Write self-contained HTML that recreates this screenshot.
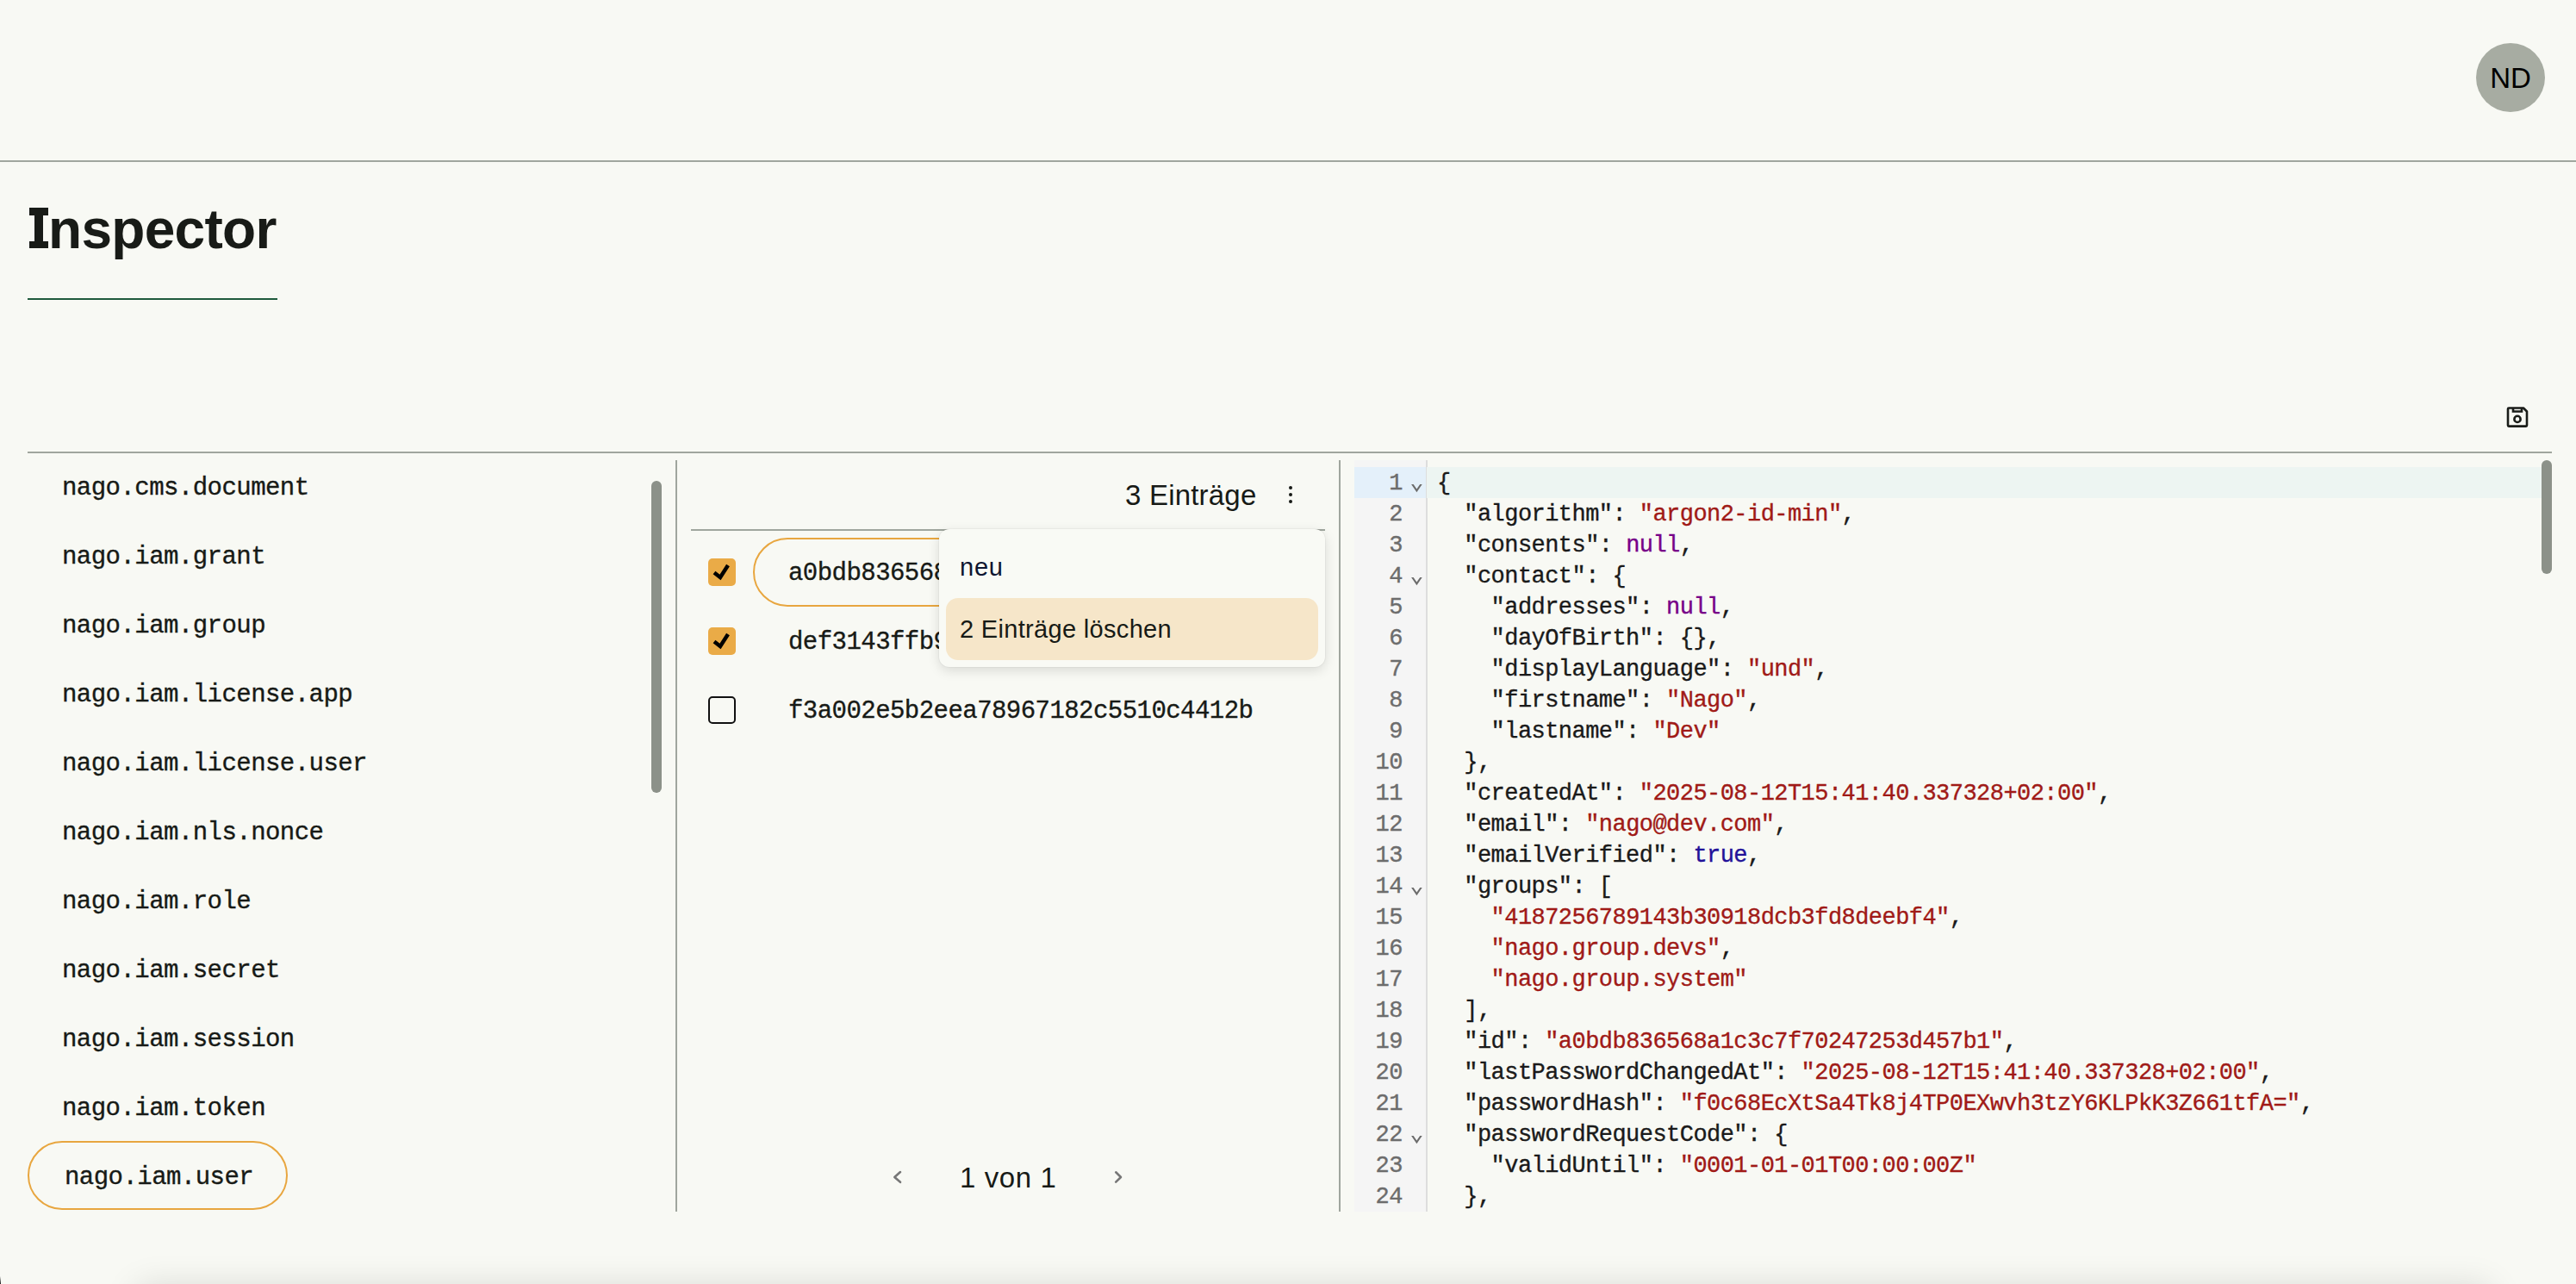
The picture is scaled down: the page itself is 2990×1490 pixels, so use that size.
<!DOCTYPE html>
<html><head><meta charset="utf-8">
<style>
html,body{margin:0;padding:0;}
body{width:2990px;height:1490px;overflow:hidden;background:#f8f9f4;position:relative;font-family:"Liberation Sans",sans-serif;color:#171a16;}
.a{position:absolute;}
.mono{font-family:"Liberation Mono",monospace;-webkit-text-stroke:0.35px currentColor;}
.hline{position:absolute;height:2px;background:#a0a69e;}
.vline{position:absolute;width:2px;background:#a0a69e;}
.li{position:absolute;left:72px;font-size:29px;line-height:40px;white-space:pre;letter-spacing:-0.547px;}
.thumb{position:absolute;width:12px;border-radius:6px;background:#8c9189;}
.cb{position:absolute;left:822px;width:32px;height:32px;border-radius:5px;box-sizing:border-box;}
.cb.on{background:#eaab47;}
.cb.off{border:2px solid #111;}
.row{position:absolute;left:915px;font-size:29px;line-height:40px;white-space:pre;letter-spacing:-0.547px;}
.code{position:absolute;left:1668px;top:543px;font-size:27px;line-height:36px;white-space:pre;color:#1a1a1a;letter-spacing:-0.551px;}
.gut{position:absolute;left:1572px;top:534px;width:83px;height:872px;background:#f5f5f5;border-right:2px solid #dddddd;}
.ln{position:absolute;left:1572px;top:543px;width:56px;text-align:right;font-size:27px;letter-spacing:-0.5px;line-height:36px;color:#6c6c6c;white-space:pre;}
.s{color:#a01a17;}
.n{color:#708;}
.b{color:#219;}
</style></head><body>

<!-- header -->
<div class="hline" style="left:0;top:186px;width:2990px;"></div>
<div class="a" style="left:2874px;top:50px;width:80px;height:80px;border-radius:50%;background:#a7aca2;"></div>
<div class="a" style="left:2874px;top:51px;width:80px;color:#000;font-size:33px;line-height:80px;text-align:center;">ND</div>

<!-- title -->
<div class="a" style="left:34px;top:241px;width:21.5px;height:8.5px;background:#181b17;"></div>
<div class="a" style="left:40px;top:241px;width:9.7px;height:46.7px;background:#181b17;"></div>
<div class="a" style="left:34px;top:279.5px;width:21.5px;height:8.2px;background:#181b17;"></div>
<div class="a" style="left:56px;top:225.5px;font-size:64px;line-height:80px;font-weight:bold;letter-spacing:-0.7px;color:#181b17;">nspector</div>
<div class="a" style="left:32px;top:346px;width:290px;height:2px;background:#1f5a3c;"></div>

<!-- save icon -->
<svg class="a" style="left:2906px;top:468px;" width="32" height="32" viewBox="0 0 32 32">
  <path d="M6 5.5 H23 L27 9.5 V25.6 Q27 26.6 26 26.6 H6 Q5 26.6 5 25.6 V6.5 Q5 5.5 6 5.5 Z" fill="none" stroke="#1a1d19" stroke-width="2.6" stroke-linejoin="round"/>
  <path d="M11 5.5 V9.5 H21 V5.5" fill="none" stroke="#1a1d19" stroke-width="2.6"/>
  <circle cx="16" cy="18.4" r="3.6" fill="none" stroke="#1a1d19" stroke-width="2.6"/>
</svg>

<!-- main top border -->
<div class="hline" style="left:32px;top:524px;width:2930px;"></div>

<!-- left list -->
<div class="mono">
<div class="li" style="top:547px;">nago.cms.document</div>
<div class="li" style="top:627px;">nago.iam.grant</div>
<div class="li" style="top:707px;">nago.iam.group</div>
<div class="li" style="top:787px;">nago.iam.license.app</div>
<div class="li" style="top:867px;">nago.iam.license.user</div>
<div class="li" style="top:947px;">nago.iam.nls.nonce</div>
<div class="li" style="top:1027px;">nago.iam.role</div>
<div class="li" style="top:1107px;">nago.iam.secret</div>
<div class="li" style="top:1187px;">nago.iam.session</div>
<div class="li" style="top:1267px;">nago.iam.token</div>
<div class="a" style="left:32px;top:1324px;width:302px;height:80px;box-sizing:border-box;border:2px solid #e8a63f;border-radius:40px;"></div>
<div class="li" style="top:1347px;left:75px;">nago.iam.user</div>
</div>
<div class="thumb" style="left:756px;top:558px;height:362px;"></div>
<div class="vline" style="left:784px;top:534px;height:872px;"></div>

<!-- middle -->
<div class="a" style="left:1306px;top:555px;font-size:33px;line-height:40px;letter-spacing:0.2px;">3 Einträge</div>
<div class="a" style="left:1496px;top:564px;width:4px;height:4px;border-radius:50%;background:#171a16;"></div>
<div class="a" style="left:1496px;top:572px;width:4px;height:4px;border-radius:50%;background:#171a16;"></div>
<div class="a" style="left:1496px;top:580px;width:4px;height:4px;border-radius:50%;background:#171a16;"></div>
<div class="hline" style="left:802px;top:614px;width:736px;"></div>

<div class="cb on" style="top:648px;"><svg width="32" height="32" viewBox="0 0 32 32"><path d="M7 16.5 L14 22 L23 8" fill="none" stroke="#000" stroke-width="4.5" stroke-linejoin="miter"/></svg></div>
<div class="cb on" style="top:728px;"><svg width="32" height="32" viewBox="0 0 32 32"><path d="M7 16.5 L14 22 L23 8" fill="none" stroke="#000" stroke-width="4.5" stroke-linejoin="miter"/></svg></div>
<div class="cb off" style="top:808px;"></div>

<div class="a" style="left:874px;top:624px;width:660px;height:80px;box-sizing:border-box;border:2px solid #e8a63f;border-radius:40px;"></div>
<div class="mono">
<div class="row" style="top:646px;">a0bdb836568a1c3c7f70247253d457b1</div>
<div class="row" style="top:726px;">def3143ffb9aa1c3c7f70247253d457</div>
<div class="row" style="top:806px;">f3a002e5b2eea78967182c5510c4412b</div>
</div>

<!-- dropdown -->
<div class="a" style="left:1090px;top:614px;width:448px;height:160px;border-radius:12px;background:#f9faf5;box-shadow:0 4px 14px rgba(0,0,0,0.13),0 0 0 1px rgba(0,0,0,0.03);"></div>
<div class="a" style="left:1114px;top:640px;font-size:29px;line-height:36px;letter-spacing:0.8px;color:#0e1530;">neu</div>
<div class="a" style="left:1098px;top:694px;width:432px;height:72px;border-radius:14px;background:#f6e6c9;"></div>
<div class="a" style="left:1114px;top:712px;font-size:29px;line-height:36px;letter-spacing:0.32px;color:#171a16;">2 Einträge löschen</div>

<!-- pagination -->
<svg class="a" style="left:1034px;top:1356px;" width="16" height="20" viewBox="0 0 16 20"><path d="M11 4.1 L4.3 10 L11 15.8" fill="none" stroke="#777" stroke-width="2.6" stroke-linecap="round" stroke-linejoin="round"/></svg>
<div class="a" style="left:1114px;top:1347px;font-size:33px;line-height:40px;letter-spacing:0.6px;">1 von 1</div>
<svg class="a" style="left:1290px;top:1356px;" width="16" height="20" viewBox="0 0 16 20"><path d="M5.2 4.3 L11 10 L5.2 15.6" fill="none" stroke="#777" stroke-width="2.6" stroke-linecap="round" stroke-linejoin="round"/></svg>

<div class="vline" style="left:1554px;top:534px;height:872px;"></div>

<!-- editor -->
<div class="gut"></div>
<div class="a" style="left:1572px;top:542px;width:83px;height:36px;background:#e4f0fa;"></div>
<div class="a" style="left:1656px;top:542px;width:1294px;height:36px;background:#edf5f2;"></div>
<div class="mono">
<div class="ln">1
2
3
4
5
6
7
8
9
10
11
12
13
14
15
16
17
18
19
20
21
22
23
24</div>
<div class="code">{
  "algorithm": <span class="s">"argon2-id-min"</span>,
  "consents": <span class="n">null</span>,
  "contact": {
    "addresses": <span class="n">null</span>,
    "dayOfBirth": {},
    "displayLanguage": <span class="s">"und"</span>,
    "firstname": <span class="s">"Nago"</span>,
    "lastname": <span class="s">"Dev"</span>
  },
  "createdAt": <span class="s">"2025-08-12T15:41:40.337328+02:00"</span>,
  "email": <span class="s">"nago@dev.com"</span>,
  "emailVerified": <span class="b">true</span>,
  "groups": [
    <span class="s">"4187256789143b30918dcb3fd8deebf4"</span>,
    <span class="s">"nago.group.devs"</span>,
    <span class="s">"nago.group.system"</span>
  ],
  "id": <span class="s">"a0bdb836568a1c3c7f70247253d457b1"</span>,
  "lastPasswordChangedAt": <span class="s">"2025-08-12T15:41:40.337328+02:00"</span>,
  "passwordHash": <span class="s">"f0c68EcXtSa4Tk8j4TP0EXwvh3tzY6KLPkK3Z661tfA="</span>,
  "passwordRequestCode": {
    "validUntil": <span class="s">"0001-01-01T00:00:00Z"</span>
  },</div>
</div>
<!-- fold markers -->
<svg class="a" style="left:1636px;top:560px;" width="16" height="14" viewBox="0 0 16 14"><polygon points="2.1,2 4.6,2 8.4,7.6 12.2,2 14.7,2 8.4,11.2" fill="#6c6c6c"/></svg>
<svg class="a" style="left:1636px;top:668px;" width="16" height="14" viewBox="0 0 16 14"><polygon points="2.1,2 4.6,2 8.4,7.6 12.2,2 14.7,2 8.4,11.2" fill="#6c6c6c"/></svg>
<svg class="a" style="left:1636px;top:1028px;" width="16" height="14" viewBox="0 0 16 14"><polygon points="2.1,2 4.6,2 8.4,7.6 12.2,2 14.7,2 8.4,11.2" fill="#6c6c6c"/></svg>
<svg class="a" style="left:1636px;top:1316px;" width="16" height="14" viewBox="0 0 16 14"><polygon points="2.1,2 4.6,2 8.4,7.6 12.2,2 14.7,2 8.4,11.2" fill="#6c6c6c"/></svg>

<div class="thumb" style="left:2950px;top:534px;height:132px;"></div>

<!-- bottom shadow -->
<div class="a" style="left:0;top:1481px;width:1px;height:9px;background:linear-gradient(rgba(20,20,20,0),#141414);"></div>
<div class="a" style="left:160px;top:1494px;width:2730px;height:40px;box-shadow:0 0 40px 0 rgba(0,0,0,0.14);"></div>
</body></html>
